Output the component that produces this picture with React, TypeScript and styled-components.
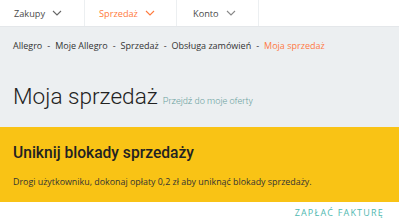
import styled, { createGlobalStyle } from "styled-components";

const GlobalStyle = createGlobalStyle`
  html, body {
    margin: 0;
    padding: 0;
    background: #fff;
  }
  body {
    font-family: "Open Sans", "Liberation Sans", sans-serif;
    width: 399px;
    overflow: hidden;
  }
`;

const Page = styled.div`
  display: flex;
  flex-direction: column;
`;

const TopNav = styled.nav`
  display: flex;
  height: 26px;
  background: #fff;
  border-bottom: 1px solid #e4e7ea;
`;

const Tab = styled.div<{ $active?: boolean; $width: number; $indent: number }>`
  display: flex;
  align-items: center;
  gap: 7px;
  width: ${(p) => p.$width}px;
  padding-left: ${(p) => p.$indent}px;
  box-sizing: border-box;
  border-right: 1px solid #eceff1;
  font-size: 9.2px;
  color: ${(p) => (p.$active ? "#ff7a3d" : "#4a4a4a")};
`;

const Chevron = ({ color }: { color: string }) => (
  <svg width="10" height="6" viewBox="0 0 10 6">
    <path d="M1 1l4 4 4-4" fill="none" stroke={color} strokeWidth="1.1" />
  </svg>
);

const Hero = styled.header`
  background: #eceff1;
  padding: 11px 13px 0;
  height: 100px;
  box-sizing: border-box;
`;

const Crumbs = styled.div`
  display: flex;
  gap: 5px;
  font-size: 9px;
  color: #333;
  line-height: 16px;
`;

const Crumb = styled.span<{ $current?: boolean }>`
  color: ${(p) => (p.$current ? "#ff7a45" : "#333")};
`;

const TitleRow = styled.div`
  display: flex;
  align-items: baseline;
  gap: 5px;
  margin-top: 28px;
`;

const Title = styled.h1`
  margin: 0;
  font-family: Roboto, "Liberation Sans", sans-serif;
  font-weight: 300;
  font-size: 22.6px;
  color: #222;
  line-height: 30px;
`;

const TitleLink = styled.a`
  font-family: Roboto, "Liberation Sans", sans-serif;
  font-weight: 300;
  font-size: 9.2px;
  color: #6a9fa0;
  text-decoration: none;
`;

const Banner = styled.section`
  background: #f9c315;
  height: 75px;
  padding: 15px 13px 0;
  box-sizing: border-box;
`;

const BannerTitle = styled.h2`
  margin: 0;
  font-family: Roboto, "Liberation Sans", sans-serif;
  font-weight: 500;
  font-size: 15.6px;
  line-height: 22px;
  color: #222;
`;

const BannerText = styled.p`
  margin: 12px 0 0;
  font-size: 8.9px;
  line-height: 12px;
  color: #333;
`;

const Actions = styled.div`
  display: flex;
  justify-content: flex-end;
  padding: 4px 15px 0;
`;

const PayButton = styled.a`
  font-size: 9px;
  letter-spacing: 1.2px;
  color: #4fb8b0;
  text-transform: uppercase;
  text-decoration: none;
`;

export default function App() {
  return (
    <Page>
      <GlobalStyle />
      <TopNav>
        <Tab $width={85} $indent={14}>
          Zakupy <Chevron color="#666" />
        </Tab>
        <Tab $active $width={92} $indent={14}>
          Sprzedaż <Chevron color="#ff7a3d" />
        </Tab>
        <Tab $width={82} $indent={16}>
          Konto <Chevron color="#888" />
        </Tab>
      </TopNav>
      <Hero>
        <Crumbs>
          <Crumb>Allegro</Crumb>
          <Crumb>-</Crumb>
          <Crumb>Moje Allegro</Crumb>
          <Crumb>-</Crumb>
          <Crumb>Sprzedaż</Crumb>
          <Crumb>-</Crumb>
          <Crumb>Obsługa zamówień</Crumb>
          <Crumb>-</Crumb>
          <Crumb $current>Moja sprzedaż</Crumb>
        </Crumbs>
        <TitleRow>
          <Title>Moja sprzedaż</Title>
          <TitleLink href="#">Przejdź do moje oferty</TitleLink>
        </TitleRow>
      </Hero>
      <Banner>
        <BannerTitle>Uniknij blokady sprzedaży</BannerTitle>
        <BannerText>
          Drogi użytkowniku, dokonaj opłaty 0,2 zł aby uniknąć blokady sprzedaży.
        </BannerText>
      </Banner>
      <Actions>
        <PayButton href="#">Zapłać fakturę</PayButton>
      </Actions>
    </Page>
  );
}
